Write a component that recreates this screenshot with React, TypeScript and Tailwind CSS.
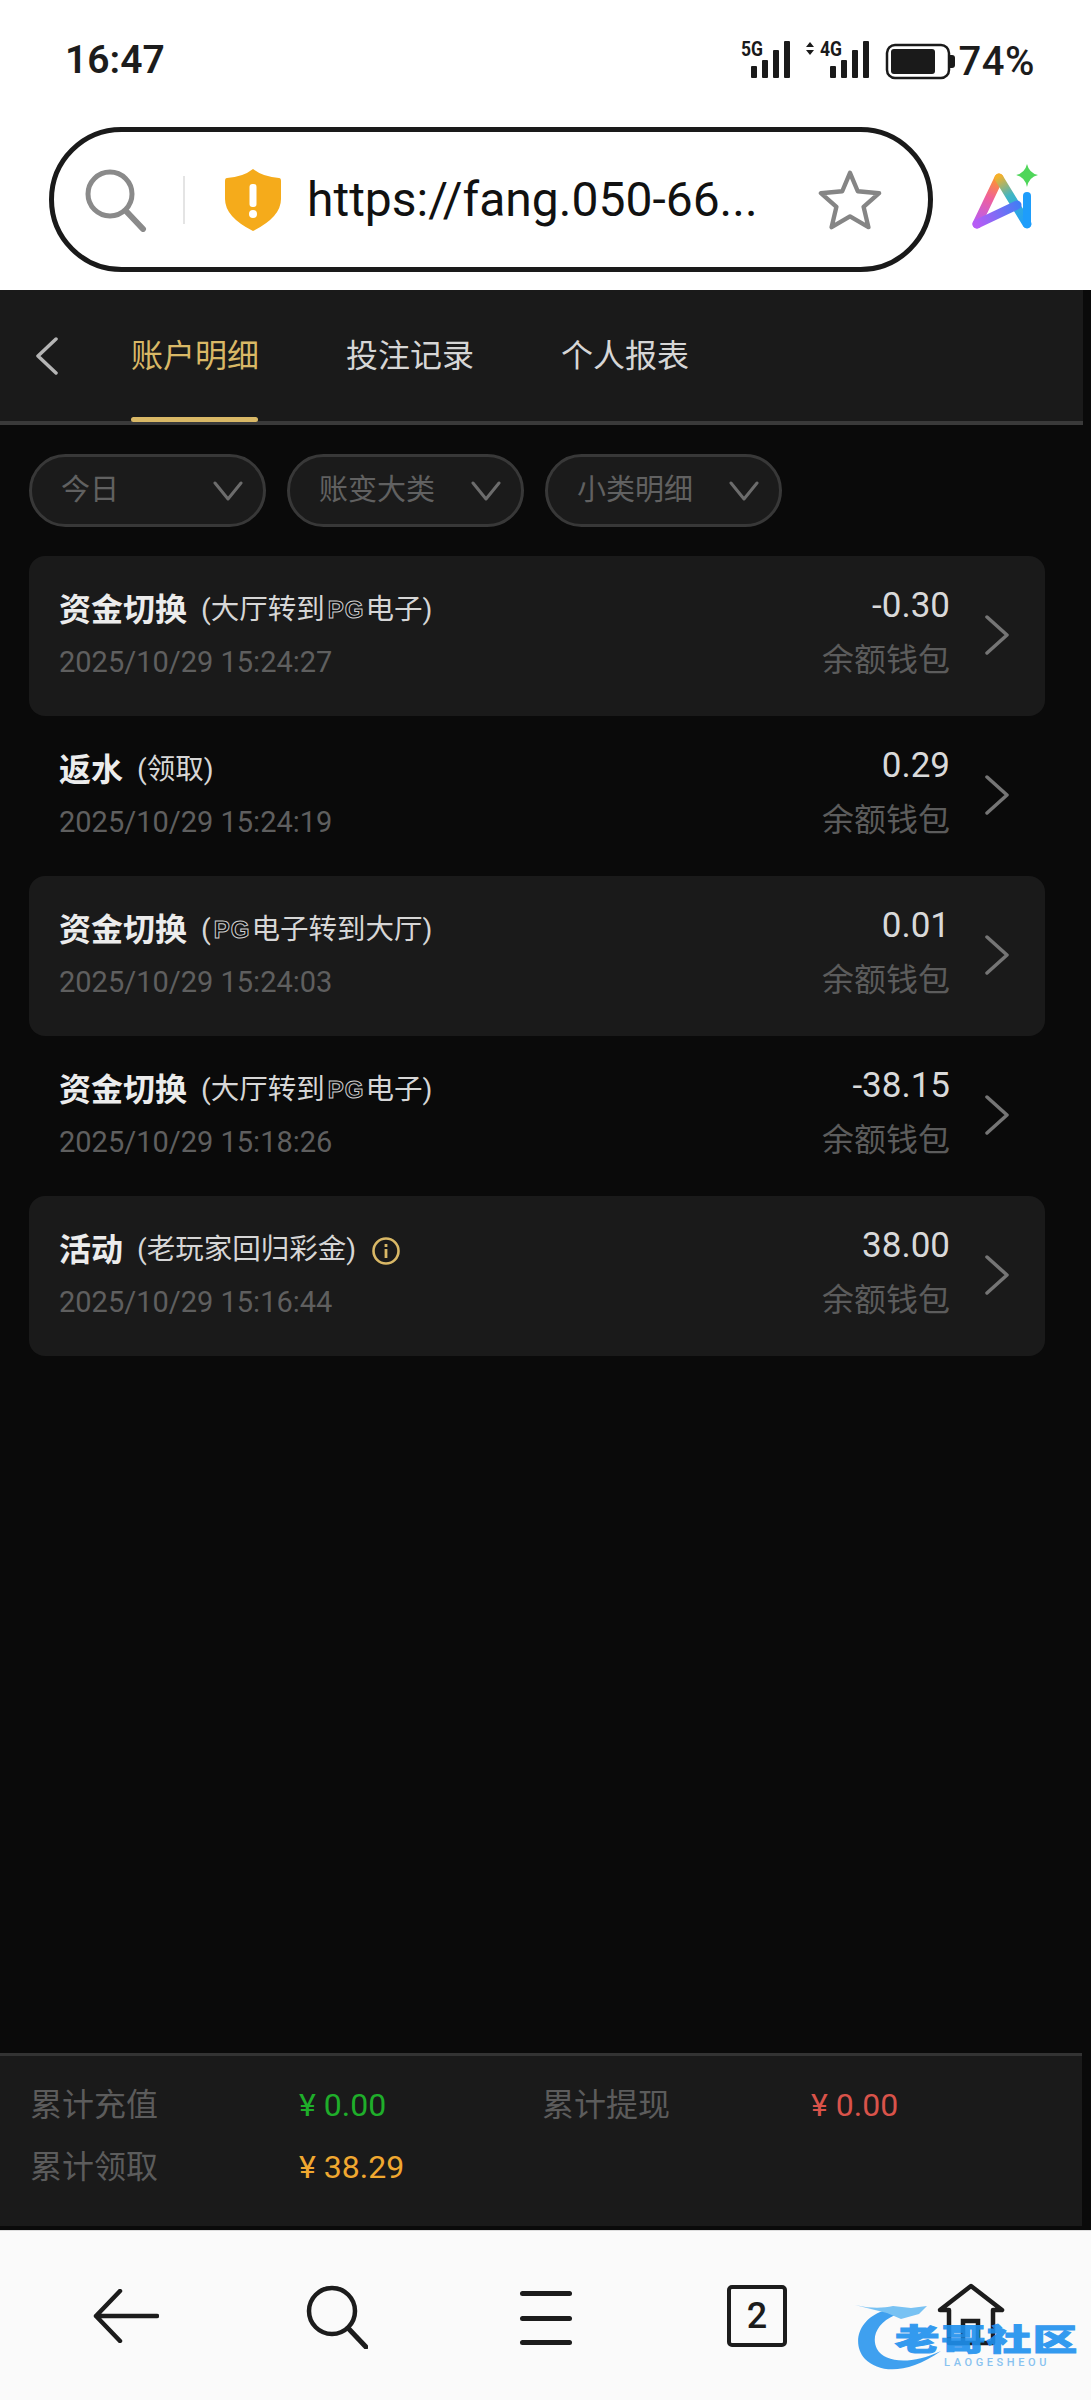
import type { ReactNode } from 'react'

const Pg = () => (
  <span className="ml-[3px] mr-[1px] inline-block font-['Liberation_Sans'] text-[24px] font-bold leading-none tracking-[1px] text-[#0c0c0c] [-webkit-text-stroke:1px_#cfcfcf]">
    PG
  </span>
)

const Chevron = () => (
  <svg width="26" height="40" viewBox="0 0 26 40" fill="none" className="ml-[34px] mt-[-3px] shrink-0">
    <path d="M3 2 L23 20 L3 38" stroke="#757575" strokeWidth="3.5" strokeLinecap="round" strokeLinejoin="round" />
  </svg>
)

const Info = () => (
  <svg width="30" height="30" viewBox="0 0 30 30" fill="none" className="ml-[15px] mt-[1px] shrink-0">
    <circle cx="15" cy="15" r="12.5" stroke="#d9b866" strokeWidth="2.6" />
    <rect x="13.6" y="13" width="2.8" height="9" fill="#d9b866" />
    <rect x="13.6" y="8" width="2.8" height="3" fill="#d9b866" />
  </svg>
)

interface RowProps {
  title: string
  detail: ReactNode
  time: string
  amount: string
  filled?: boolean
  info?: boolean
}

function Row({ title, detail, time, amount, filled, info }: RowProps) {
  return (
    <div className={`flex h-[160px] items-center rounded-[16px] pl-[30px] pr-[35px] ${filled ? 'bg-[#1a1a1a]' : ''}`}>
      <div className="min-w-0 flex-1">
        <div className="flex h-[44px] items-center">
          <span className="text-[32px] font-bold text-[#ececec]">{title}</span>
          <span className="ml-[14px] flex items-center text-[28.5px] text-[#d6d6d6]">{detail}</span>
          {info && <Info />}
        </div>
        <div className="mt-[8px] text-[29px] leading-[44px] text-[#5f5f5f]">{time}</div>
      </div>
      <div className="mt-[-7px] text-right">
        <div className="h-[44px] text-[35px] leading-[44px] text-[#d9d9d9]">{amount}</div>
        <div className="mt-[10px] text-[32px] leading-[44px] text-[#5c5c5c]">余额钱包</div>
      </div>
      <Chevron />
    </div>
  )
}

function Filter({ label }: { label: string }) {
  return (
    <div className="flex h-[73px] w-[237px] items-center justify-between rounded-full border-[3px] border-[#383838] bg-[#1b1b1b] pl-[29px] pr-[20px]">
      <span className="text-[29px] text-[#616161]">{label}</span>
      <svg width="30" height="20" viewBox="0 0 30 20" fill="none">
        <path d="M2 2 L15 18 L28 2" stroke="#6c6c6c" strokeWidth="3" strokeLinecap="round" strokeLinejoin="round" />
      </svg>
    </div>
  )
}

function Signal({ x }: { x: number }) {
  return (
    <g fill="#1a1a1a">
      <rect x={x} y="25" width="6" height="12" rx="1" />
      <rect x={x + 11} y="19" width="6" height="18" rx="1" />
      <rect x={x + 22} y="9" width="6" height="28" rx="1" />
      <rect x={x + 33} y="0" width="6" height="37" rx="1" />
    </g>
  )
}

function StatusIcons() {
  return (
    <svg width="214" height="48" viewBox="0 -8 214 48" fill="none" className="mt-[-8px]">
      <text x="0" y="15" fontFamily="Roboto" fontSize="20" fontWeight="700" fill="#1a1a1a" textLength="22" lengthAdjust="spacingAndGlyphs">5G</text>
      <Signal x={10} />
      <path d="M65 6 L69 1 L73 6 Z M65 9 L69 14 L73 9 Z" fill="#1a1a1a" />
      <text x="79" y="15" fontFamily="Roboto" fontSize="20" fontWeight="700" fill="#1a1a1a" textLength="22" lengthAdjust="spacingAndGlyphs">4G</text>
      <Signal x={89} />
      <rect x="146" y="4" width="62" height="33" rx="8" stroke="#1a1a1a" strokeWidth="2.5" />
      <rect x="150" y="8" width="44" height="25" rx="3" fill="#1a1a1a" />
      <path d="M209 14 h2 a3 3 0 0 1 3 3 v7 a3 3 0 0 1 -3 3 h-2 Z" fill="#1a1a1a" />
    </svg>
  )
}

function AiIcon() {
  return (
    <svg width="72" height="68" viewBox="0 0 72 68" fill="none">
      <defs>
        <linearGradient id="left" x1="28" y1="12" x2="6" y2="60" gradientUnits="userSpaceOnUse">
          <stop offset="0" stopColor="#ff9f1c" />
          <stop offset="0.45" stopColor="#f0609a" />
          <stop offset="1" stopColor="#b65cf5" />
        </linearGradient>
        <linearGradient id="right" x1="28" y1="12" x2="56" y2="60" gradientUnits="userSpaceOnUse">
          <stop offset="0" stopColor="#f5b12a" />
          <stop offset="0.4" stopColor="#3fb6c4" />
          <stop offset="1" stopColor="#1e9dfb" />
        </linearGradient>
        <linearGradient id="bar" x1="6" y1="60" x2="50" y2="38" gradientUnits="userSpaceOnUse">
          <stop offset="0" stopColor="#b65cf5" />
          <stop offset="1" stopColor="#3b7ff5" />
        </linearGradient>
      </defs>
      <path d="M6 60 L28 14" stroke="url(#left)" strokeWidth="9" strokeLinecap="round" />
      <path d="M28 14 L56 60" stroke="url(#right)" strokeWidth="9" strokeLinecap="round" />
      <path d="M6 60 L46 41" stroke="url(#bar)" strokeWidth="9" strokeLinecap="round" />
      <path d="M56 32 V60" stroke="#1e9dfb" strokeWidth="8" strokeLinecap="round" />
      <path d="M56 0 Q58 9 67 11 Q58 13 56 23 Q54 13 45 11 Q54 9 56 0 Z" fill="#4fd65a" />
    </svg>
  )
}

export default function App() {
  return (
    <div className="flex h-[2400px] w-[1091px] flex-col overflow-hidden bg-[#0a0a0a] font-['Roboto','Noto_Sans_CJK_SC',sans-serif]">
      {/* status bar + browser url bar */}
      <div className="h-[290px] shrink-0 bg-white">
        <div className="flex h-[127px] items-start justify-between pl-[65px] pr-[56px] pt-[38px]">
          <span className="text-[39px] font-semibold leading-[44px] text-[#1c1c1c]">16:47</span>
          <div className="flex items-start gap-[4px] pt-[3px]">
            <StatusIcons />
            <span className="text-[40px] font-medium leading-[42px] tracking-[0.5px] text-[#1c1c1c]">74%</span>
          </div>
        </div>
        <div className="flex items-center pl-[49px]">
          <div className="flex h-[145px] w-[884px] items-center rounded-full border-[5px] border-[#1a1a1a] pl-[29px]">
            <svg width="64" height="64" viewBox="0 0 64 64" fill="none" className="shrink-0">
              <circle cx="27" cy="26" r="22" stroke="#8a8a8a" strokeWidth="5" />
              <path d="M43 43 L60 61" stroke="#8a8a8a" strokeWidth="6" strokeLinecap="round" />
            </svg>
            <div className="ml-[36px] h-[48px] w-[2px] shrink-0 bg-[#e4e4e4]" />
            <svg width="56" height="62" viewBox="0 0 56 62" className="ml-[40px] shrink-0">
              <path d="M28 0 Q38 8 54 9 Q56 9 56 12 V30 Q56 48 28 62 Q0 48 0 30 V12 Q0 9 2 9 Q18 8 28 0 Z" fill="#f5ab1b" />
              <rect x="24.5" y="15" width="7" height="23" rx="3" fill="#fff" />
              <circle cx="28" cy="45" r="4" fill="#fff" />
            </svg>
            <span className="ml-[26px] w-[450px] whitespace-nowrap text-[48px] leading-none text-[#111]">https://fang.050-66...</span>
            <svg width="64" height="62" viewBox="0 0 66 62" fill="none" className="ml-[61px] shrink-0">
              <path d="M33 3 L41 22 L63 24 L47 38 L52 59 L33 48 L14 59 L19 38 L3 24 L25 22 Z" stroke="#858585" strokeWidth="4.5" strokeLinejoin="round" />
            </svg>
          </div>
          <div className="ml-[38px] mt-[-3px]">
            <AiIcon />
          </div>
        </div>
      </div>

      {/* tabs */}
      <div className="relative flex h-[135px] w-[1083px] shrink-0 items-start border-b-[4px] border-[#3a3a3a] bg-[#1a1a1a] pl-[34px] pt-[47px]">
        <svg width="26" height="38" viewBox="0 0 26 38" fill="none" className="shrink-0">
          <path d="M22 2 L4 19 L22 36" stroke="#b5b5b5" strokeWidth="3.5" strokeLinecap="round" strokeLinejoin="round" />
        </svg>
        <div className="ml-[71px] flex gap-[87px] text-[32px] leading-[38px] text-[#d6d6d6]">
          <span className="text-[#d9b866]">账户明细</span>
          <span>投注记录</span>
          <span>个人报表</span>
        </div>
        <div className="absolute bottom-[-1px] left-[131px] h-[5px] w-[127px] rounded-full bg-[#d9b866]" />
      </div>

      {/* filters + list */}
      <div className="flex-1 px-[29px] pt-[29px]">
        <div className="flex gap-[21px]">
          <Filter label="今日" />
          <Filter label="账变大类" />
          <Filter label="小类明细" />
        </div>
        <div className="mt-[29px] w-[1016px]">
          <Row filled title="资金切换" detail={<>(大厅转到<Pg />电子)</>} time="2025/10/29 15:24:27" amount="-0.30" />
          <Row title="返水" detail="(领取)" time="2025/10/29 15:24:19" amount="0.29" />
          <Row filled title="资金切换" detail={<>(<Pg />电子转到大厅)</>} time="2025/10/29 15:24:03" amount="0.01" />
          <Row title="资金切换" detail={<>(大厅转到<Pg />电子)</>} time="2025/10/29 15:18:26" amount="-38.15" />
          <Row filled info title="活动" detail="(老玩家回归彩金)" time="2025/10/29 15:16:44" amount="38.00" />
        </div>
      </div>

      {/* totals */}
      <div className="h-[173px] w-[1082px] shrink-0 border-t-[3px] border-[#333] bg-[#1a1a1a] pl-[30px] pt-[27px]">
        <div className="grid grid-cols-[269px_243px_269px_1fr] gap-y-[18px] text-[32px] leading-[44px]">
          <span className="text-[#5c5c5c]">累计充值</span>
          <span className="text-[#1fae2a]">¥ 0.00</span>
          <span className="text-[#5c5c5c]">累计提现</span>
          <span className="text-[#d9534a]">¥ 0.00</span>
          <span className="text-[#5c5c5c]">累计领取</span>
          <span className="text-[#f0a830]">¥ 38.29</span>
        </div>
      </div>

      {/* browser bottom bar */}
      <div className="relative mt-[4px] flex h-[170px] shrink-0 items-start border-t border-[#ddd] bg-[#fafafa] pl-[93px] pt-[54px]">
        <svg width="66" height="54" viewBox="0 0 66 54" fill="none" className="mt-[4px] shrink-0">
          <path d="M27 2 L3 27 L27 52 M3 27 H64" stroke="#1c1c1c" strokeWidth="4.5" strokeLinecap="round" strokeLinejoin="round" />
        </svg>
        <svg width="62" height="64" viewBox="0 0 62 64" fill="none" className="ml-[147px] shrink-0">
          <circle cx="26" cy="26" r="23" stroke="#1c1c1c" strokeWidth="4.5" />
          <path d="M42 43 L60 62" stroke="#1c1c1c" strokeWidth="5" strokeLinecap="round" />
        </svg>
        <div className="ml-[152px] mt-[6px] flex h-[54px] w-[52px] shrink-0 flex-col justify-between">
          <div className="h-[5px] rounded-full bg-[#1c1c1c]" />
          <div className="h-[5px] rounded-full bg-[#1c1c1c]" />
          <div className="h-[5px] rounded-full bg-[#1c1c1c]" />
        </div>
        <div className="ml-[155px] flex h-[62px] w-[60px] shrink-0 items-center justify-center rounded-[5px] border-[4px] border-[#1c1c1c] text-[36px] font-medium leading-none text-[#1c1c1c]">
          2
        </div>

        {/* watermark sits over the home icon */}
        <svg width="68" height="64" viewBox="0 0 68 64" fill="none" className="ml-[150px] mt-[-2px] shrink-0">
          <path d="M3 27 L34 3 L65 27 H56 V60 H12 V27 Z" stroke="#1c1c1c" strokeWidth="4.5" strokeLinejoin="round" />
          <path d="M26 60 V38 H41 V60" stroke="#1c1c1c" strokeWidth="4.5" />
        </svg>
        <div className="absolute left-[853px] top-[72px] h-[76px] w-[226px] opacity-90">
          <svg width="90" height="70" viewBox="0 0 90 70" fill="none" className="absolute left-0 top-0">
            <path d="M30 8 C6 16 -2 40 12 56 C26 70 54 72 88 48 C58 62 32 60 24 46 C18 34 24 20 42 12 Z" fill="#2b97ee" />
            <path d="M2 2 C20 6 30 5 40 3 L58 5 L74 3 L66 11 L48 16 L34 10 Z" fill="#6bbcf3" />
          </svg>
          <div className="absolute left-[42px] top-[20px] origin-left scale-x-[1.48] whitespace-nowrap text-[30px] font-black leading-[34px] tracking-[1px] text-[#1e90ee] [-webkit-text-stroke:1px_#1e90ee]">
            老哥社区
          </div>
          <div className="absolute left-[91px] top-[54px] whitespace-nowrap text-[11px] font-medium leading-none tracking-[3.6px] text-[#7dbdf0]">
            LAOGESHEOU
          </div>
        </div>
      </div>
    </div>
  )
}
